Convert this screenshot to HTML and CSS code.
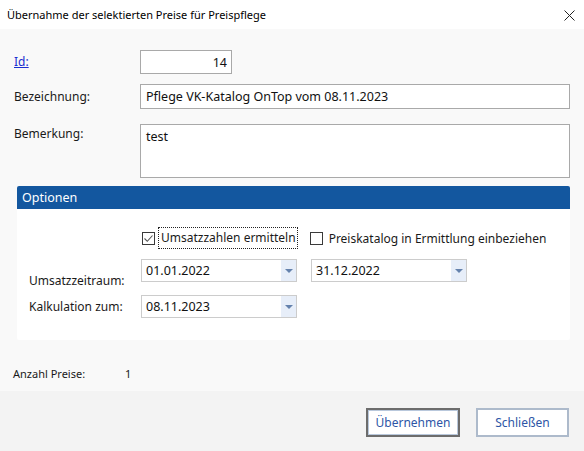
FILE: index.html
```html
<!DOCTYPE html>
<html lang="de">
<head>
<meta charset="utf-8">
<title>Übernahme</title>
<link rel="stylesheet" href="styles.css">
</head>
<body>
<div class="dialog">
  <div class="titlebar">
    <span class="title">Übernahme der selektierten Preise für Preispflege</span>
    <svg class="close" width="11" height="11" viewBox="0 0 11 11"><path d="M0.5 0.5L10.5 10.5M10.5 0.5L0.5 10.5" stroke="#222" stroke-width="1"/></svg>
  </div>
  <div class="content">
    <div class="form">
      <a class="label link" href="#">Id:</a>
      <div class="field id">14</div>
      <span class="label row2">Bezeichnung:</span>
      <div class="field wide">Pflege VK-Katalog OnTop vom 08.11.2023</div>
      <span class="label top">Bemerkung:</span>
      <div class="field area">test</div>
    </div>
    <div class="panel">
      <div class="panel-head">Optionen</div>
      <div class="panel-body">
        <div class="checks">
          <label class="check"><span class="box"><svg width="11" height="11" viewBox="0 0 11 11"><path d="M1.5 5.5L4.3 8.3L9.5 2.5" fill="none" stroke="#555" stroke-width="1.1"/></svg></span><span class="focus">Umsatzzahlen ermitteln</span></label>
          <label class="check second"><span class="box"></span><span>Preiskatalog in Ermittlung einbeziehen</span></label>
        </div>
        <span class="plabel low">Umsatzzeitraum:</span>
        <div class="combo c-from"><span class="val">01.01.2022</span><span class="drop"><i></i></span></div>
        <div class="combo c-to"><span class="val">31.12.2022</span><span class="drop"><i></i></span></div>
        <span class="plabel next">Kalkulation zum:</span>
        <div class="combo c-calc next"><span class="val">08.11.2023</span><span class="drop"><i></i></span></div>
      </div>
    </div>
    <div class="count"><span class="count-label">Anzahl Preise:</span><span>1</span></div>
  </div>
  <div class="footer">
    <button class="btn default">Übernehmen</button>
    <button class="btn">Schließen</button>
  </div>
</div>
</body>
</html>
```

FILE: styles.css
```css
* { box-sizing: border-box; }
html, body { margin: 0; padding: 0; }
body {
  width: 584px;
  height: 451px;
  overflow: hidden;
  font-family: "Noto Sans", sans-serif;
  font-size: 12px;
  color: #1a1a1a;
  background: #f9f9f9;
}
.dialog { display: flex; flex-direction: column; height: 451px; }
.titlebar {
  height: 29px;
  flex: none;
  background: #ffffff;
  display: flex;
  align-items: center;
  justify-content: space-between;
  padding: 0 9px 0 7px;
}
.title { font-size: 11px; color: #000; }
.close { display: block; margin-top: 1px; }
.content {
  height: 362px;
  flex: none;
  background: #f9f9f9;
  padding-top: 21px;
}
.form {
  display: grid;
  grid-template-columns: 126px 430px;
  margin-left: 14px;
  align-items: center;
}
.label { line-height: 16px; }
.label.row2 { margin-top: 10px; }
.label.top { align-self: start; margin-top: 17px; }
.link { color: #1a2fd0; text-decoration: underline; width: max-content; }
.field {
  background: #fff;
  border: 1px solid #a9a9a9;
  padding: 0 5px;
  display: flex;
  align-items: center;
  font-size: 12.5px;
  color: #111;
}
.field.id { width: 92px; height: 24px; justify-content: flex-end; padding-right: 4px; }
.field.wide { height: 25px; margin-top: 10px; }
.field.area { height: 54px; margin-top: 15px; align-items: flex-start; padding-top: 3px; }
.panel {
  margin: 8px 0 0 17px;
  width: 553px;
  border-radius: 2px;
  overflow: hidden;
  background: #fff;
}
.panel-head {
  height: 23px;
  background: #13579f;
  color: #fff;
  padding-left: 5px;
  line-height: 23px;
  font-size: 12.5px;
}
.panel-body {
  display: grid;
  grid-template-columns: 98px 156px 156px 1fr;
  column-gap: 14px;
  padding: 19px 0 22px 12px;
  align-items: center;
}
.checks {
  grid-column: 2 / 5;
  grid-row: 1;
  display: flex;
  align-items: center;
  height: 20px;
  margin-bottom: 11px;
  white-space: nowrap;
}
.check { display: flex; align-items: center; }
.box {
  width: 13px;
  height: 13px;
  border: 1px solid #3a3a3a;
  background: #fff;
  margin-left: 1px;
  margin-right: 4px;
  display: flex;
  align-items: center;
  justify-content: center;
}
.box svg { display: block; }
.focus { outline: 1px dotted #222; padding: 2px 1px 2px 2px; line-height: 16px; }
.check.second { margin-left: 12px; }
.check.second .box { margin-right: 6px; }
.plabel { line-height: 16px; grid-column: 1; }
.plabel.low { grid-row: 2; align-self: end; margin-bottom: -7px; }
.plabel.next { grid-row: 3; }
.combo {
  height: 23px;
  border: 1px solid #cccccc;
  background: #fff;
  display: flex;
  align-items: stretch;
}
.c-from { grid-row: 2; grid-column: 2; }
.c-to { grid-row: 2; grid-column: 3; }
.c-calc { grid-row: 3; grid-column: 2; }
.next { margin-top: 13px; }
.val { flex: 1; padding-left: 4px; display: flex; align-items: center; font-size: 12.5px; color: #111; }
.drop {
  width: 15px;
  background: #e7eef9;
  display: flex;
  align-items: center;
  justify-content: center;
}
.drop i {
  width: 0; height: 0;
  border-left: 4px solid transparent;
  border-right: 4px solid transparent;
  border-top: 4px solid #6582ad;
  margin-top: 1px;
}
.count { display: flex; margin: 26px 0 0 13px; line-height: 16px; font-size: 11px; }
.count-label { width: 112px; }
.footer {
  height: 60px;
  flex: none;
  background: #f3f3f3;
  display: flex;
  justify-content: flex-end;
  align-items: flex-start;
  padding: 17px 15px 0 0;
  gap: 16px;
}
.btn {
  height: 29px;
  width: 93px;
  background: #fff;
  border: 2px solid #adbacb;
  font-family: inherit;
  font-size: 12px;
  color: #2d55a6;
  padding: 0;
}
.btn.default {
  width: 94px;
  border-color: #6c6c6c;
  box-shadow: inset 0 0 0 1px #b9c8dc;
}
```
